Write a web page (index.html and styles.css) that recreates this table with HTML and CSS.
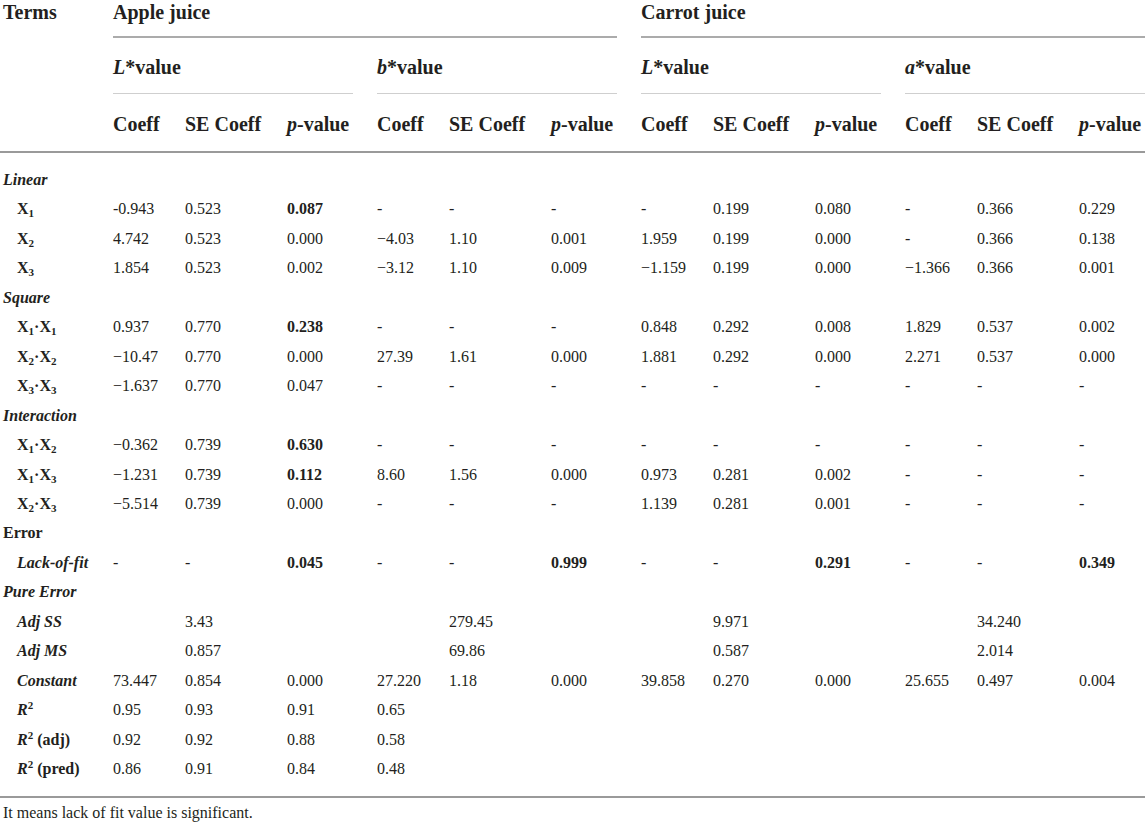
FILE: index.html
```html
<!DOCTYPE html>
<html lang="en">
<head>
    <meta charset="UTF-8">
    <meta name="viewport" content="width=device-width, initial-scale=1.0">
    <title>Regression coefficients</title>
    <link rel="stylesheet" href="styles.css">
</head>
<body>

    <table class="coef">
        <colgroup>
            <col class="c-terms">
            <col class="c-co"><col class="c-se"><col class="c-p">
            <col class="c-co"><col class="c-se"><col class="c-p">
            <col class="c-co"><col class="c-se"><col class="c-p">
            <col class="c-co"><col class="c-se"><col class="c-p-last">
        </colgroup>
        <thead>
            <tr class="h1">
                <th class="terms" rowspan="3">Terms</th>
                <th colspan="6"><span class="rule">Apple juice</span></th>
                <th colspan="6"><span class="rule last">Carrot juice</span></th>
            </tr>
            <tr class="h2">
                <th colspan="3"><span class="rule"><i>L</i>*value</span></th>
                <th colspan="3"><span class="rule"><i>b</i>*value</span></th>
                <th colspan="3"><span class="rule"><i>L</i>*value</span></th>
                <th colspan="3"><span class="rule last"><i>a</i>*value</span></th>
            </tr>
            <tr class="h3">
                <th>Coeff</th><th>SE Coeff</th><th><i>p</i>-value</th>
                <th>Coeff</th><th>SE Coeff</th><th><i>p</i>-value</th>
                <th>Coeff</th><th>SE Coeff</th><th><i>p</i>-value</th>
                <th>Coeff</th><th>SE Coeff</th><th><i>p</i>-value</th>
            </tr>
        </thead>
        <tbody>
            <tr><td class="grp"><b><i>Linear</i></b></td><td colspan="12"></td></tr>
            <tr>
                <td class="lbl"><b>X<sub>1</sub></b></td>
                <td>-0.943</td><td>0.523</td><td><b>0.087</b></td>
                <td>-</td><td>-</td><td>-</td>
                <td>-</td><td>0.199</td><td>0.080</td>
                <td>-</td><td>0.366</td><td>0.229</td>
            </tr>
            <tr>
                <td class="lbl"><b>X<sub>2</sub></b></td>
                <td>4.742</td><td>0.523</td><td>0.000</td>
                <td>−4.03</td><td>1.10</td><td>0.001</td>
                <td>1.959</td><td>0.199</td><td>0.000</td>
                <td>-</td><td>0.366</td><td>0.138</td>
            </tr>
            <tr>
                <td class="lbl"><b>X<sub>3</sub></b></td>
                <td>1.854</td><td>0.523</td><td>0.002</td>
                <td>−3.12</td><td>1.10</td><td>0.009</td>
                <td>−1.159</td><td>0.199</td><td>0.000</td>
                <td>−1.366</td><td>0.366</td><td>0.001</td>
            </tr>
            <tr><td class="grp"><b><i>Square</i></b></td><td colspan="12"></td></tr>
            <tr>
                <td class="lbl"><b>X<sub>1</sub>·X<sub>1</sub></b></td>
                <td>0.937</td><td>0.770</td><td><b>0.238</b></td>
                <td>-</td><td>-</td><td>-</td>
                <td>0.848</td><td>0.292</td><td>0.008</td>
                <td>1.829</td><td>0.537</td><td>0.002</td>
            </tr>
            <tr>
                <td class="lbl"><b>X<sub>2</sub>·X<sub>2</sub></b></td>
                <td>−10.47</td><td>0.770</td><td>0.000</td>
                <td>27.39</td><td>1.61</td><td>0.000</td>
                <td>1.881</td><td>0.292</td><td>0.000</td>
                <td>2.271</td><td>0.537</td><td>0.000</td>
            </tr>
            <tr>
                <td class="lbl"><b>X<sub>3</sub>·X<sub>3</sub></b></td>
                <td>−1.637</td><td>0.770</td><td>0.047</td>
                <td>-</td><td>-</td><td>-</td>
                <td>-</td><td>-</td><td>-</td>
                <td>-</td><td>-</td><td>-</td>
            </tr>
            <tr><td class="grp"><b><i>Interaction</i></b></td><td colspan="12"></td></tr>
            <tr>
                <td class="lbl"><b>X<sub>1</sub>·X<sub>2</sub></b></td>
                <td>−0.362</td><td>0.739</td><td><b>0.630</b></td>
                <td>-</td><td>-</td><td>-</td>
                <td>-</td><td>-</td><td>-</td>
                <td>-</td><td>-</td><td>-</td>
            </tr>
            <tr>
                <td class="lbl"><b>X<sub>1</sub>·X<sub>3</sub></b></td>
                <td>−1.231</td><td>0.739</td><td><b>0.112</b></td>
                <td>8.60</td><td>1.56</td><td>0.000</td>
                <td>0.973</td><td>0.281</td><td>0.002</td>
                <td>-</td><td>-</td><td>-</td>
            </tr>
            <tr>
                <td class="lbl"><b>X<sub>2</sub>·X<sub>3</sub></b></td>
                <td>−5.514</td><td>0.739</td><td>0.000</td>
                <td>-</td><td>-</td><td>-</td>
                <td>1.139</td><td>0.281</td><td>0.001</td>
                <td>-</td><td>-</td><td>-</td>
            </tr>
            <tr><td class="grp"><b>Error</b></td><td colspan="12"></td></tr>
            <tr>
                <td class="lbl"><b><i>Lack-of-fit</i></b></td>
                <td>-</td><td>-</td><td><b>0.045</b></td>
                <td>-</td><td>-</td><td><b>0.999</b></td>
                <td>-</td><td>-</td><td><b>0.291</b></td>
                <td>-</td><td>-</td><td><b>0.349</b></td>
            </tr>
            <tr><td class="grp"><b><i>Pure Error</i></b></td><td colspan="12"></td></tr>
            <tr>
                <td class="lbl"><b><i>Adj SS</i></b></td>
                <td></td><td>3.43</td><td></td>
                <td></td><td>279.45</td><td></td>
                <td></td><td>9.971</td><td></td>
                <td></td><td>34.240</td><td></td>
            </tr>
            <tr>
                <td class="lbl"><b><i>Adj MS</i></b></td>
                <td></td><td>0.857</td><td></td>
                <td></td><td>69.86</td><td></td>
                <td></td><td>0.587</td><td></td>
                <td></td><td>2.014</td><td></td>
            </tr>
            <tr>
                <td class="lbl"><b><i>Constant</i></b></td>
                <td>73.447</td><td>0.854</td><td>0.000</td>
                <td>27.220</td><td>1.18</td><td>0.000</td>
                <td>39.858</td><td>0.270</td><td>0.000</td>
                <td>25.655</td><td>0.497</td><td>0.004</td>
            </tr>
            <tr>
                <td class="lbl"><b><i>R</i><sup>2</sup></b></td>
                <td>0.95</td><td>0.93</td><td>0.91</td>
                <td>0.65</td><td colspan="8"></td>
            </tr>
            <tr>
                <td class="lbl"><b><i>R</i><sup>2</sup> (adj)</b></td>
                <td>0.92</td><td>0.92</td><td>0.88</td>
                <td>0.58</td><td colspan="8"></td>
            </tr>
            <tr>
                <td class="lbl"><b><i>R</i><sup>2</sup> (pred)</b></td>
                <td>0.86</td><td>0.91</td><td>0.84</td>
                <td>0.48</td><td colspan="8"></td>
            </tr>
        </tbody>
    </table>

    <p class="note">It means lack of fit value is significant.</p>

</body>
</html>
```

FILE: styles.css
```css
body {
    margin: 0;
    padding: 0;
    font-family: "Liberation Serif", "Times New Roman", serif;
    color: #231f20;
    background: #fff;
}

.coef {
    width: 1145px;
    table-layout: fixed;
    border-collapse: collapse;
    font-size: 16px;
}

.c-terms { width: 113px; }
.c-co { width: 72px; }
.c-se { width: 102px; }
.c-p { width: 90px; }
.c-p-last { width: 66px; }

.coef th {
    padding: 0;
    text-align: left;
    vertical-align: top;
    font-size: 20px;
    font-weight: bold;
    line-height: 24px;
    white-space: nowrap;
}

.coef th.terms {
    padding-left: 3px;
}

.rule {
    display: block;
    margin-right: 24px;
}

.rule.last {
    margin-right: 0;
}

.h1 .rule {
    padding-bottom: 12px;
    border-bottom: 2px solid #ababab;
}

.h2 .rule {
    padding-top: 17px;
    padding-bottom: 14px;
    border-bottom: 1px solid #cfcfcf;
}

.h3 th {
    padding-top: 18px;
    padding-bottom: 15px;
}

.coef thead {
    border-bottom: 2px solid #9a9a9a;
}

.coef tbody {
    border-bottom: 2px solid #9a9a9a;
}

.coef td {
    padding: 0;
    line-height: 29.45px;
    vertical-align: top;
    white-space: nowrap;
}

.coef tbody tr:first-child td {
    padding-top: 12px;
}

.coef tbody tr:last-child td {
    padding-bottom: 12px;
}

.coef td.grp {
    padding-left: 3px;
}

.coef td.lbl {
    padding-left: 17px;
}

sub {
    font-size: 11px;
    line-height: 0;
    vertical-align: -3px;
}

sup {
    font-size: 11px;
    line-height: 0;
    vertical-align: 6px;
}

.note {
    margin: 0;
    padding: 5px 0 0 3px;
    font-size: 16px;
    line-height: 20px;
}
```
